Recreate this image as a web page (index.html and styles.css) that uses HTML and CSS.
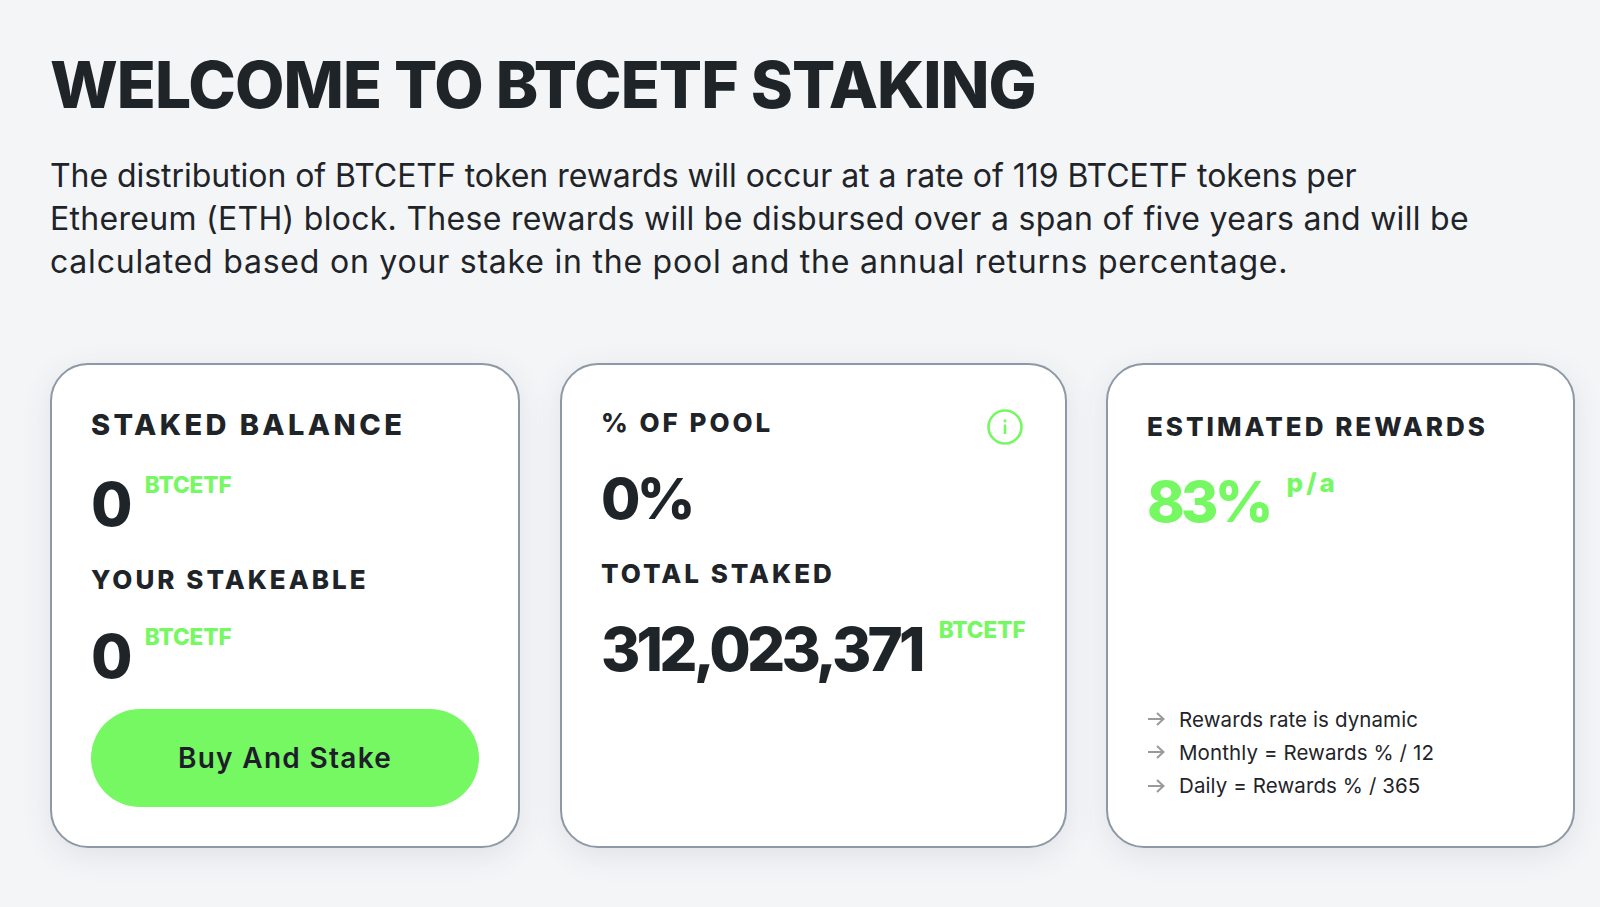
FILE: index.html
```html
<!DOCTYPE html>
<html lang="en">
<head>
<meta charset="utf-8">
<title>BTCETF Staking</title>
<link rel="stylesheet" href="styles.css">
</head>
<body>
<main class="page">
  <h1 class="title">WELCOME TO BTCETF STAKING</h1>
  <p class="intro"><span class="line line-1">The distribution of BTCETF token rewards will occur at a rate of 119 BTCETF tokens per</span> <span class="line line-2">Ethereum (ETH) block. These rewards will be disbursed over a span of five years and will be</span> <span class="line line-3">calculated based on your stake in the pool and the annual returns percentage.</span></p>
  <section class="cards">
    <article class="card card-balance">
      <h2 class="label label-lg">STAKED BALANCE</h2>
      <div class="stat stat-first"><span class="value">0</span><span class="unit">BTCETF</span></div>
      <h2 class="label label-next">YOUR STAKEABLE</h2>
      <div class="stat"><span class="value">0</span><span class="unit">BTCETF</span></div>
      <button class="buy">Buy And Stake</button>
    </article>
    <article class="card card-pool">
      <div class="label-row">
        <h2 class="label">% OF POOL</h2>
        <svg class="info" viewBox="0 0 36 36" aria-hidden="true"><circle cx="18" cy="18" r="16.5" fill="none" stroke="#75f862" stroke-width="2.6"/><path d="M18 15.5v9.500" stroke="#75f862" stroke-width="2.6" fill="none"/><path d="M18 10.500v2.800" stroke="#75f862" stroke-width="2.6" fill="none"/></svg>
      </div>
      <div class="stat stat-first"><span class="value value-pct">0%</span></div>
      <h2 class="label label-next">TOTAL STAKED</h2>
      <div class="stat"><span class="value">312,023,371</span><span class="unit">BTCETF</span></div>
    </article>
    <article class="card card-rewards">
      <h2 class="label">ESTIMATED REWARDS</h2>
      <div class="stat"><span class="value value-pct green">83%</span><span class="unit unit-pa">p/a</span></div>
      <ul class="notes">
        <li><svg class="arrow" viewBox="0 0 18 14" aria-hidden="true"><path d="M1 7h15.500M10 1l6.500 6-6.500 6" fill="none" stroke="#9a9a9a" stroke-width="2"/></svg>Rewards rate is dynamic</li>
        <li><svg class="arrow" viewBox="0 0 18 14" aria-hidden="true"><path d="M1 7h15.500M10 1l6.500 6-6.500 6" fill="none" stroke="#9a9a9a" stroke-width="2"/></svg>Monthly = Rewards % / 12</li>
        <li><svg class="arrow" viewBox="0 0 18 14" aria-hidden="true"><path d="M1 7h15.500M10 1l6.500 6-6.500 6" fill="none" stroke="#9a9a9a" stroke-width="2"/></svg>Daily = Rewards % / 365</li>
      </ul>
    </article>
  </section>
</main>
</body>
</html>
```
FILE: styles.css
```css
* { box-sizing: border-box; }
html, body { margin: 0; height: 100%; }
body {
  background: #f4f5f7;
  color: #1f2429;
  font-family: Inter, "Liberation Sans", sans-serif;
  overflow: hidden;
}
.page { padding: 46px 25px 0 50px; }
.title {
  margin: 0;
  font-size: 64px;
  line-height: 78px;
  font-weight: 800;
  letter-spacing: -0.95px;
}
.intro {
  margin: 30px 0 0;
  width: 1500px;
  font-size: 32px;
  line-height: 43.2px;
  font-weight: 400;
}
.line { display: block; }
.line-1 { letter-spacing: -0.05px; }
.line-2 { letter-spacing: 0.29px; }
.line-3 { letter-spacing: 0.78px; }
.cards { display: flex; gap: 39px; margin-top: 79.6px; }
.card {
  height: 485px;
  background: #fff;
  border: 2px solid #8d99a5;
  border-radius: 38px;
  box-shadow: 0 8px 30px rgba(60, 70, 90, 0.10);
  padding: 42px 40px 0 39px;
  display: flex;
  flex-direction: column;
}
.card-balance { width: 470px; margin-right: 1px; }
.card-rewards { width: 471px; }
.card-pool { width: 507px; }
.label {
  margin: 0;
  font-size: 26px;
  line-height: 36px;
  font-weight: 800;
  letter-spacing: 3px;
}
.label-lg { font-size: 29px; letter-spacing: 3.4px; }
.label-next { margin-top: 18px; }
.label-row { display: flex; justify-content: space-between; align-items: flex-start; height: 36px; margin-top: -2px; }
.info { width: 36px; height: 36px; margin: 4px 2px 0 0; }
.card-rewards .label { margin-top: 2px; }
.stat { display: flex; align-items: flex-start; margin-top: 18px; flex-shrink: 0; }
.stat-first { margin-top: 21px; }
.card-pool .stat-first { margin-top: 18px; }
.card-pool .label-next { margin-top: 17px; }
.card-pool .stat:last-child { margin-top: 17px; }
.card-rewards .stat { margin-top: 17px; }
.value { font-size: 60px; line-height: 80px; font-weight: 800; letter-spacing: -3.8px; }
.value-pct { font-size: 57px; }
.green { color: #75f862; }
.unit {
  margin: 5px 0 0 16px;
  font-size: 22.5px;
  line-height: 32px;
  font-weight: 800;
  color: #75f862;
}
.card-pool .unit { margin-left: 17px; }
.unit-pa { font-size: 26px; letter-spacing: 3px; margin: 5px 0 0 17px; }
.buy {
  flex-shrink: 0;
  margin-top: 13px;
  width: 388px;
  height: 98px;
  border: 0;
  border-radius: 49px;
  background: #75f862;
  color: #1f1d2b;
  font: 600 28px Inter, "Liberation Sans", sans-serif;
  letter-spacing: 1.3px;
}
.notes { list-style: none; margin: auto 0 0; padding: 0 0 44px; }
.notes li { display: flex; align-items: center; height: 33.2px; font-size: 20.5px; letter-spacing: 0.1px; }
.arrow { width: 18px; height: 14px; margin-right: 14px; }
```
